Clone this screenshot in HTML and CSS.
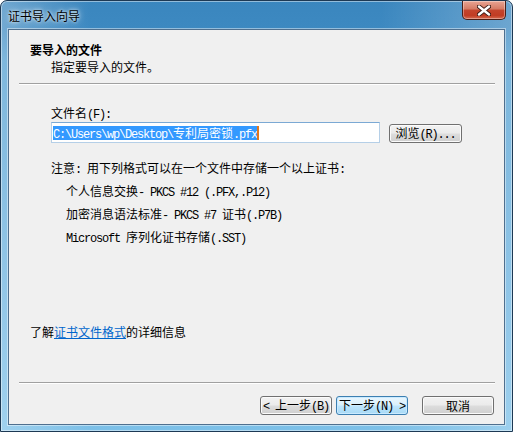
FILE: index.html
```html
<!DOCTYPE html>
<html lang="zh-CN">
<head>
<meta charset="utf-8">
<title>证书导入向导</title>
<link rel="stylesheet" href="styles.css">
</head>
<body>
<div class="window">
  <div class="titlebar">
    <span class="title">证书导入向导</span>
    <div class="close">
      <svg width="14" height="11" viewBox="0 0 14 11"><path d="M2 1.5 L12 9.5 M12 1.5 L2 9.5" stroke="#3a1a14" stroke-width="4.2" stroke-linecap="round"/><path d="M2 1.5 L12 9.5 M12 1.5 L2 9.5" stroke="#ffffff" stroke-width="2.4" stroke-linecap="round"/></svg>
    </div>
  </div>
  <div class="client">
    <div class="header">
      <div class="h-title">要导入的文件</div>
      <div class="h-sub">指定要导入的文件。</div>
    </div>
    <div class="sep"></div>
    <div class="content">
      <div class="field">
        <div class="line label">文件名<span class="m">(F):</span></div>
        <div class="row">
          <div class="input"><span class="sel"><span class="m">C:\Users\wp\Desktop\</span>专利局密锁<span class="m">.pfx</span></span><span class="caret"></span></div>
          <button class="btn browse">浏览<span class="m">(R)...</span></button>
        </div>
        <div class="line note">注意<span class="m">: </span>用下列格式可以在一个文件中存储一个以上证书<span class="m">:</span></div>
        <ul class="formats">
          <li>个人信息交换<span class="m">- PKCS #12 (.PFX,.P12)</span></li>
          <li>加密消息语法标准<span class="m">- PKCS #7 </span>证书<span class="m">(.P7B)</span></li>
          <li><span class="m">Microsoft </span>序列化证书存储<span class="m">(.SST)</span></li>
        </ul>
      </div>
      <div class="line more">了解<a class="link" href="#">证书文件格式</a>的详细信息</div>
    </div>
    <div class="footer">
      <div class="sep"></div>
      <div class="buttons">
        <button class="btn"><span class="m">&lt; </span>上一步<span class="m">(B)</span></button>
        <button class="btn default">下一步<span class="m">(N) &gt;</span></button>
        <button class="btn cancel">取消</button>
      </div>
    </div>
  </div>
</div>
</body>
</html>
```
FILE: styles.css
```css
html, body {
  margin: 0;
  padding: 0;
  background: #ffffff;
}
body {
  width: 513px;
  height: 432px;
  overflow: hidden;
  font-family: "Noto Sans CJK SC", "Liberation Sans", sans-serif;
  font-size: 12px;
  color: #000;
}
.window {
  box-sizing: border-box;
  width: 513px;
  height: 432px;
  border: 1px solid #1d3954;
  border-radius: 7px 7px 0 0;
  padding: 0 7px 6px 7px;
  display: flex;
  flex-direction: column;
  background:
    linear-gradient(to right, rgba(255,255,255,0.28) 0, rgba(255,255,255,0) 90px, rgba(255,255,255,0) 380px, rgba(255,255,255,0.25) 100%),
    linear-gradient(to bottom, #3a86be 0, #3d89c1 28px, #4f9dd0 60px, #6cb3e0 300px, #7cc0e8 100%);
  box-shadow: inset 0 0 0 1px rgba(255,255,255,0.45);
}
.titlebar {
  height: 28px;
  flex: none;
  display: flex;
  align-items: center;
}
.title {
  font-size: 12px;
  line-height: 16px;
  color: #000;
  text-shadow: 0 0 6px rgba(255,255,255,0.9), 0 0 3px rgba(255,255,255,0.8);
  margin-top: 2px;
}
.close {
  margin-left: auto;
  margin-right: -1px;
  align-self: flex-start;
  width: 44px;
  height: 19px;
  box-sizing: border-box;
  border: 1px solid #4a1e16;
  border-top: none;
  border-radius: 0 0 5px 5px;
  background: linear-gradient(to bottom, #e8a493 0, #d47a64 45%, #c4452d 50%, #c13c23 80%, #d46a50 100%);
  box-shadow: inset 0 0 0 1px rgba(255,255,255,0.35);
  display: flex;
  align-items: center;
  justify-content: center;
}
.client {
  flex: 1;
  box-sizing: border-box;
  background: #f0f0f0;
  border: 1px solid #4f6f8e;
  box-shadow: 0 0 0 1px rgba(255,255,255,0.45);
  display: flex;
  flex-direction: column;
}
.header {
  padding: 12px 0 0 21px;
}
.h-title {
  font-weight: bold;
  line-height: 16px;
  height: 16px;
}
.h-sub {
  line-height: 16px;
  height: 16px;
  margin-top: 1px;
  padding-left: 21px;
}
.sep {
  height: 1px;
  background: #a0a0a0;
  border-bottom: 1px solid #ffffff;
  margin: 8px 9px 0 10px;
}
.content {
  padding-left: 21px;
}
.field {
  padding-left: 21px;
  margin-top: 20px;
}
.line {
  line-height: 16px;
  height: 16px;
  white-space: nowrap;
}
.m {
  font-family: "Liberation Mono", monospace;
  font-size: 12px;
  letter-spacing: -1.2px;
  white-space: pre;
}
.row {
  display: flex;
  align-items: center;
  margin-top: 1px;
}
.input {
  box-sizing: border-box;
  width: 329px;
  height: 21px;
  background: #fff;
  border: 1px solid #b5cfe7;
  border-top-color: #7ba9d4;
  padding: 1px 0 0 1px;
  display: flex;
  align-items: center;
  white-space: nowrap;
}
.sel {
  background: #3399ff;
  color: #fff;
  line-height: 14px;
  height: 14px;
  display: inline-block;
}
.caret {
  display: inline-block;
  width: 2px;
  height: 14px;
  background: #e0761e;
}
.btn {
  box-sizing: border-box;
  width: 72px;
  height: 19px;
  padding: 0;
  margin: 0;
  font-family: "Noto Sans CJK SC", sans-serif;
  font-size: 12px;
  line-height: 15px;
  color: #000;
  border: 1px solid #707070;
  border-radius: 3px;
  background: linear-gradient(to bottom, #f2f2f2 0, #ebebeb 48%, #dddddd 52%, #cfcfcf 100%);
  box-shadow: inset 0 0 0 1px #fbfbfb;
  white-space: nowrap;
}
.browse {
  width: 73px;
  margin-left: 9px;
  margin-top: 2px;
}
.note {
  margin-top: 17px;
}
.formats {
  list-style: none;
  margin: 3px 0 0 0;
  padding: 0 0 0 15px;
}
.formats li {
  line-height: 23px;
  height: 23px;
  white-space: nowrap;
}
.more {
  margin-top: 76px;
}
.link {
  color: #0066cc;
  text-decoration: underline;
}
.footer {
  margin-top: auto;
}
.footer .sep {
  margin-top: 0;
}
.buttons {
  display: flex;
  justify-content: flex-end;
  padding: 12px 10px 9px 0;
  gap: 4px;
}
.default {
  border-color: #3c7fb1;
  background: linear-gradient(to bottom, #eaf6fd 0, #d9f0fc 48%, #bee6fd 52%, #a7d9f5 100%);
  box-shadow: inset 0 0 0 1px #c9eaff;
}
.cancel {
  margin-left: 10px;
}
```
